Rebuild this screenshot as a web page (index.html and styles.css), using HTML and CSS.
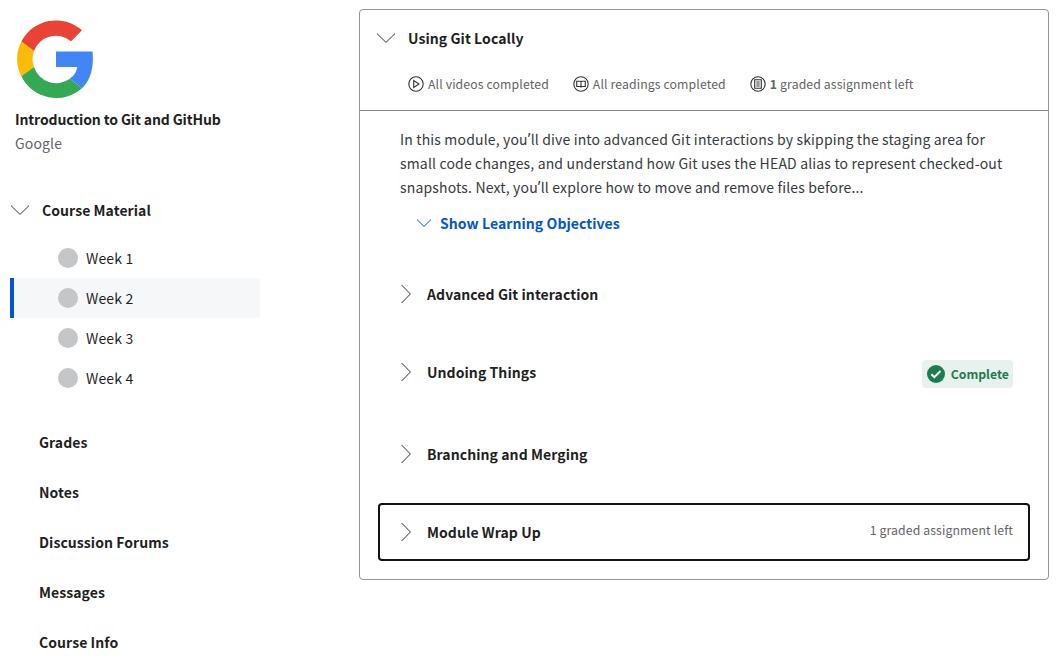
FILE: index.html
```html
<!DOCTYPE html>
<html lang="en">
<head>
<meta charset="utf-8">
<title>Introduction to Git and GitHub</title>
<link rel="stylesheet" href="styles.css">
</head>
<body>
<div class="page">
  <aside class="sidebar">
    <svg class="logo" viewBox="17 20 77 78" aria-label="Google">
      <path fill="#ea4335" d="M82 30.3A39 39 0 0 0 21.3 41.6L34 51A23.3 23.3 0 0 1 71 41.2Z"/>
      <path fill="#fbbc05" d="M21.3 41.6A39 39 0 0 0 21.3 76.2L34 67A23.3 23.3 0 0 1 34 51Z"/>
      <path fill="#34a853" d="M21.3 76.2A39 39 0 0 0 82 88.3L69.8 78.8A23.3 23.3 0 0 1 34 67Z"/>
      <path fill="#4285f4" d="M56 51.5H92.5C94 65 91.5 79.5 82 88.3L69.8 78.8A18 18 0 0 0 77.3 67H56Z"/>
    </svg>
    <h1 class="course-title">Introduction to Git and GitHub</h1>
    <div class="partner">Google</div>
    <h2 class="material">
      <svg class="chevron-down" viewBox="0 0 20 10"><path d="M1 .6l9 8.8 9-8.8"/></svg>
      <span>Course Material</span>
    </h2>
    <ul class="weeks">
      <li class="week"><i class="dot"></i>Week 1</li>
      <li class="week active"><i class="dot"></i>Week 2</li>
      <li class="week"><i class="dot"></i>Week 3</li>
      <li class="week"><i class="dot"></i>Week 4</li>
    </ul>
    <nav class="links">
      <a>Grades</a><a>Notes</a><a>Discussion Forums</a><a>Messages</a><a>Course Info</a>
    </nav>
  </aside>
  <main class="card">
    <header class="card-head">
      <div class="head-title">
        <svg class="chevron-down" viewBox="0 0 20 10"><path d="M1 .6l9 8.8 9-8.8"/></svg>
        <h2>Using Git Locally</h2>
      </div>
      <div class="meta">
        <span class="meta-item"><svg class="meta-icon" viewBox="0 0 16 16"><circle cx="8" cy="8" r="7.2"/><path d="M5.7 4.5v7L11 8z"/></svg><span>All videos completed</span></span>
        <span class="meta-item"><svg class="meta-icon" viewBox="0 0 16 16"><circle cx="8" cy="8" r="7.2"/><path d="M8 5.5v6M3.7 5.3h3.5l.8.5.8-.5h3.5v5.2H8.8l-.8.6-.8-.6H3.7z"/></svg><span>All readings completed</span></span>
        <span class="meta-item"><svg class="meta-icon" viewBox="0 0 16 16"><circle cx="8" cy="8" r="7.2"/><path d="M4.7 3.7h6.6v8.6H4.7zM6.3 6h3.4M6.3 8h3.4M6.3 10h3.4"/></svg><span><b>1</b> graded assignment left</span></span>
      </div>
    </header>
    <p class="summary">In this module, you<span class="apos">’</span>ll dive into advanced Git interactions by skipping the staging area for<br>small code changes, and understand how Git uses the HEAD alias to represent checked-out<br>snapshots. Next, you<span class="apos">’</span>ll explore how to move and remove files before...</p>
    <a class="objectives"><svg class="chevron-small" viewBox="0 0 16 8"><path d="M1 .6l7 6.8 7-6.8"/></svg><span>Show Learning Objectives</span></a>
    <div class="lessons">
      <div class="lesson"><svg class="chevron-right" viewBox="0 0 10 20"><path d="M.6 1l8.8 9-8.8 9"/></svg><h3>Advanced Git interaction</h3></div>
      <div class="lesson tall"><svg class="chevron-right" viewBox="0 0 10 20"><path d="M.6 1l8.8 9-8.8 9"/></svg><h3>Undoing Things</h3>
        <span class="badge"><svg class="check" viewBox="0 0 18 18"><circle cx="9" cy="9" r="9"/><path d="M4.4 9.3l2.9 2.9 6.2-6.2"/></svg>Complete</span></div>
      <div class="lesson"><svg class="chevron-right" viewBox="0 0 10 20"><path d="M.6 1l8.8 9-8.8 9"/></svg><h3>Branching and Merging</h3></div>
      <div class="lesson focused"><svg class="chevron-right" viewBox="0 0 10 20"><path d="M.6 1l8.8 9-8.8 9"/></svg><h3>Module Wrap Up</h3><span class="left">1 graded assignment left</span></div>
    </div>
  </main>
</div>
</body>
</html>
```

FILE: styles.css
```css
* { box-sizing: border-box; }
body {
  margin: 0;
  background: #fff;
  color: #1f1f1f;
  font: 14px/24px "Noto Sans CJK SC", "Noto Sans", sans-serif;
  letter-spacing: .07px;
  overflow: hidden;
}
h1, h2, h3, p, ul { margin: 0; padding: 0; font-size: inherit; line-height: inherit; }
h1, h2, h3 { font-weight: 700; white-space: nowrap; }
svg { display: block; flex: none; fill: none; stroke: #333; }

.page { display: flex; align-items: flex-start; gap: 99px; height: 663px; padding: 0 10px; }
.sidebar { width: 250px; padding-top: 20px; }
.logo { width: 77px; height: 78px; margin-left: 7px; stroke: none; }
.course-title { margin: 9px 0 0 5px; letter-spacing: -.13px; }
.partner { margin-left: 5px; color: #636363; letter-spacing: .15px; }
.material { display: flex; align-items: center; gap: 12px; margin-top: 43px; }
.chevron-down { width: 20px; height: 10px; }

.weeks { margin-top: 16px; list-style: none; letter-spacing: .15px; }
.week { display: flex; align-items: center; gap: 8px; height: 40px; padding-left: 48px; }
.active { padding-left: 44px; border-left: 4px solid #0056d2; border-radius: 0 3px 3px 0; background: #f5f7f8; }
.dot { width: 20px; height: 20px; border-radius: 50%; background: #c4c6c8; }
.links { display: flex; flex-direction: column; gap: 26px; margin: 32px 0 0 29px; font-weight: 700; }

.card { width: 690px; height: 571px; margin-top: 9px; border: 1px solid #939399; border-radius: 4px; }
.card-head { height: 101px; padding: 16px 16px 0; border-bottom: 1px solid #85858d; }
.head-title { display: flex; align-items: center; gap: 12px; }
.meta { display: flex; gap: 24px; margin: 22px 0 0 32px; letter-spacing: .12px; }
.meta-item { display: flex; align-items: center; gap: 4px; color: #636363; font-size: 12.25px; white-space: nowrap; }
.meta-icon { width: 16px; height: 16px; stroke-width: 1.1; }

.summary { margin: 16px 0 0 40px; color: #373a3c; letter-spacing: .16px; white-space: nowrap; }
.apos { font-family: "Open Sans", sans-serif; font-size: 16px; line-height: 1; }
.objectives { display: flex; align-items: center; gap: 8px; margin: 12px 0 0 56px; color: #0056d2; font-weight: 700; }
.chevron-small { width: 16px; height: 8px; stroke: #0056d2; }

.lessons { padding: 30px 18px 0; }
.lesson { display: flex; align-items: center; height: 58px; margin-bottom: 20px; padding: 0 17px 0 22.5px; }
.lesson h3 { margin-left: 16.5px; }
.chevron-right { width: 10px; height: 20px; }
.tall { margin-bottom: 24px; }
.focused { padding: 0 15px 0 20.5px; border: 2px solid #0f1114; border-radius: 4px; }
.badge { display: flex; align-items: center; gap: 6px; height: 28px; margin: 4px 0 0 auto; padding: 0 4px 0 5px; border-radius: 4px; background: #e8f1ee; color: #1d7c50; font-size: 12.25px; font-weight: 700; letter-spacing: 0; }
.check { width: 18px; height: 18px; stroke: #fff; stroke-width: 2; }
.check circle { fill: #1d7c50; stroke: none; }
.left { margin: -4px 0 0 auto; color: #636363; font-size: 12.25px; letter-spacing: .12px; }
```
